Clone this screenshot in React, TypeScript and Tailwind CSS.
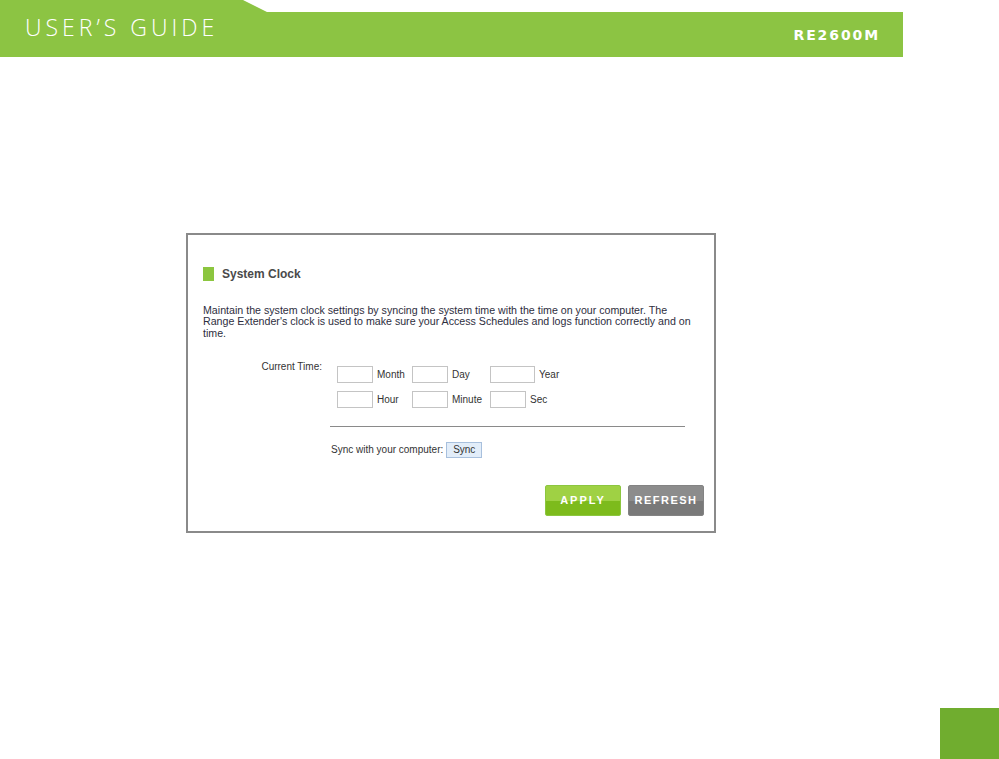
import React from 'react';

const fieldsRow1 = [
  { label: 'Month', w: 'w-[36px]' },
  { label: 'Day', w: 'w-[36px]' },
  { label: 'Year', w: 'w-[45px]' },
];
const fieldsRow2 = [
  { label: 'Hour', w: 'w-[36px]' },
  { label: 'Minute', w: 'w-[36px]' },
  { label: 'Sec', w: 'w-[36px]' },
];

function TimeRow({ fields }: { fields: { label: string; w: string }[] }) {
  return (
    <div className="flex items-center h-[17px]">
      {fields.map((f, i) => (
        <div
          key={f.label}
          className={`flex items-center gap-[4px] ${i === 0 ? 'w-[75px]' : i === 1 ? 'w-[78px]' : ''}`}
        >
          <input
            type="text"
            className={`${f.w} h-[17px] border border-[#c4c4c4] bg-white outline-none`}
          />
          <span className="text-[10px] text-[#333]">{f.label}</span>
        </div>
      ))}
    </div>
  );
}

export default function App() {
  return (
    <div className="w-[999px] h-[759px] bg-white overflow-hidden flex flex-col font-['Liberation_Sans',Arial,sans-serif]">
      {/* header band */}
      <div className="w-[903px] h-[57px] bg-[#8cc443] [clip-path:polygon(0_0,243px_0,267px_12px,100%_12px,100%_100%,0_100%)] flex items-center justify-between pt-[3px] pl-[25px] pr-[25px]">
        <span className="text-white text-[23px] font-light tracking-[4px] font-['Open_Sans',sans-serif] leading-none -mt-[5px]">
          USER’S GUIDE
        </span>
        <span className="text-white text-[14px] font-bold tracking-[1.9px] font-['DejaVu_Sans',sans-serif] leading-none mt-[9px] -mr-[2px]">
          RE2600M
        </span>
      </div>

      {/* System Clock panel */}
      <div className="ml-[186px] mt-[176px] w-[530px] h-[300px] border-2 border-[#8a8a8a] flex flex-col pl-[15px] pt-[31px]">
        <div className="flex items-center gap-[8px] h-[15px]">
          <span className="w-[11px] h-[14px] bg-[#8cc63f]" />
          <span className="text-[12px] font-bold text-[#4a4a4a]">System Clock</span>
        </div>

        <p className="mt-[24px] w-[510px] text-[10.65px] leading-[11.3px] text-[#2e2e3e]">
          Maintain the system clock settings by syncing the system time with the time on your computer. The
          <br />
          Range Extender's clock is used to make sure your Access Schedules and logs function correctly and on
          <br />
          time.
        </p>

        <div className="flex mt-[27px]">
          <div className="w-[134px] text-right text-[10px] leading-[12px] text-[#333] pr-[15px] -mt-[5px]">Current Time:</div>
          <div className="flex flex-col gap-[8px]">
            <TimeRow fields={fieldsRow1} />
            <TimeRow fields={fieldsRow2} />
          </div>
        </div>

        <div className="ml-[127px] mt-[18px] w-[355px] h-px bg-[#8a8a8a]" />

        <div className="ml-[128px] mt-[15px] flex items-center gap-[3px]">
          <span className="text-[10px] text-[#333]">Sync with your computer:</span>
          <button className="w-[36px] h-[16px] bg-[#e2edf9] border border-[#a8c0dd] text-[10px] text-[#333] leading-none">
            Sync
          </button>
        </div>

        <div className="flex justify-end gap-[7px] mt-[27px] pr-[10px]">
          <button className="w-[76px] h-[31px] rounded-[2px] bg-[linear-gradient(#9fd144_0%,#9fd144_50%,#7dbb1c_50%,#7dbb1c_100%)] text-white text-[11px] font-bold tracking-[2px] border border-[#8cc63f]">
            APPLY
          </button>
          <button className="w-[76px] h-[31px] rounded-[2px] bg-[linear-gradient(#8c8c8c_0%,#8c8c8c_50%,#797979_50%,#797979_100%)] text-white text-[11px] font-bold tracking-[1.5px] border border-[#838383]">
            REFRESH
          </button>
        </div>
      </div>

      <div className="flex justify-end mt-auto">
        <div className="w-[59px] h-[51px] bg-[#70ad2f]" />
      </div>
    </div>
  );
}
